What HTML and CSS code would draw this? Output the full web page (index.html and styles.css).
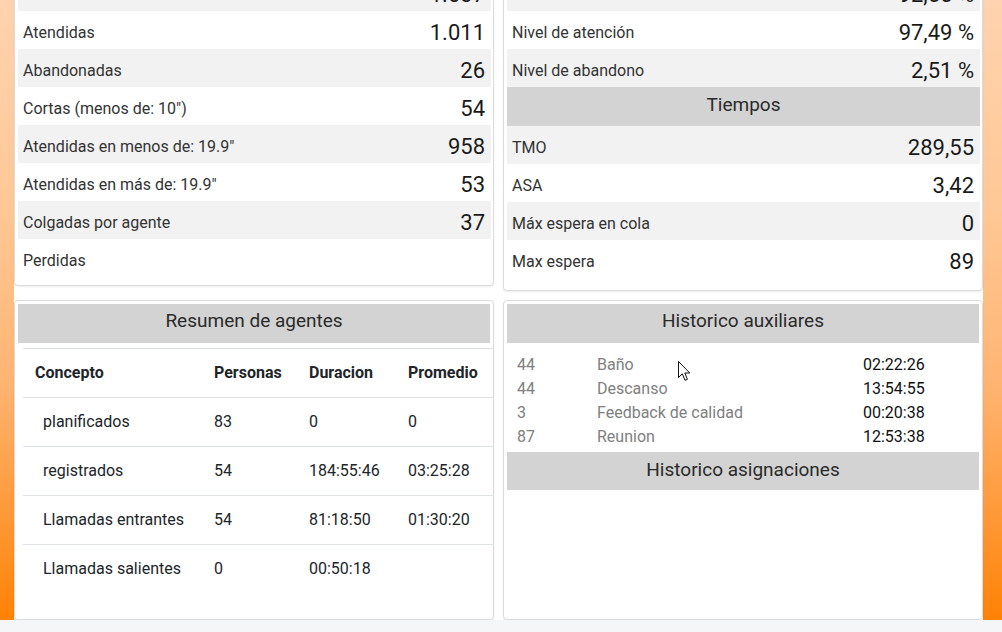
FILE: index.html
```html
<!DOCTYPE html>
<html lang="es">
<head>
<meta charset="utf-8">
<title>Resumen</title>
<link rel="stylesheet" href="styles.css">
</head>
<body>
<div class="frame">
  <div class="content">
    <div class="row1">
      <section class="card stats">
        <div class="stat alt"><span class="label">Recibidas</span><span class="value">1.037</span></div>
        <div class="stat"><span class="label">Atendidas</span><span class="value">1.011</span></div>
        <div class="stat alt"><span class="label">Abandonadas</span><span class="value">26</span></div>
        <div class="stat"><span class="label">Cortas (menos de: 10")</span><span class="value">54</span></div>
        <div class="stat alt"><span class="label">Atendidas en menos de: 19.9"</span><span class="value">958</span></div>
        <div class="stat"><span class="label">Atendidas en más de: 19.9"</span><span class="value">53</span></div>
        <div class="stat alt"><span class="label">Colgadas por agente</span><span class="value">37</span></div>
        <div class="stat"><span class="label">Perdidas</span><span class="value"></span></div>
      </section>
      <section class="card stats stats-right">
        <div class="stat alt"><span class="label">Nivel de servicio</span><span class="value">92,55 %</span></div>
        <div class="stat"><span class="label">Nivel de atención</span><span class="value">97,49 %</span></div>
        <div class="stat alt"><span class="label">Nivel de abandono</span><span class="value">2,51 %</span></div>
        <h3 class="section-title times">Tiempos</h3>
        <div class="stat alt"><span class="label">TMO</span><span class="value">289,55</span></div>
        <div class="stat"><span class="label">ASA</span><span class="value">3,42</span></div>
        <div class="stat alt"><span class="label">Máx espera en cola</span><span class="value">0</span></div>
        <div class="stat"><span class="label">Max espera</span><span class="value">89</span></div>
      </section>
    </div>
    <div class="row2">
      <section class="card">
        <h3 class="section-title">Resumen de agentes</h3>
        <table class="agents">
          <colgroup>
            <col class="c1"><col class="c2"><col class="c3"><col class="c4">
          </colgroup>
          <thead>
            <tr><th>Concepto</th><th>Personas</th><th>Duracion</th><th>Promedio</th></tr>
          </thead>
          <tbody>
            <tr><td class="concept">planificados</td><td>83</td><td>0</td><td>0</td></tr>
            <tr><td class="concept">registrados</td><td>54</td><td>184:55:46</td><td>03:25:28</td></tr>
            <tr><td class="concept">Llamadas entrantes</td><td>54</td><td>81:18:50</td><td>01:30:20</td></tr>
            <tr><td class="concept">Llamadas salientes</td><td>0</td><td>00:50:18</td><td></td></tr>
          </tbody>
        </table>
      </section>
      <section class="card history">
        <h3 class="section-title">Historico auxiliares</h3>
        <div class="aux-list">
          <span class="muted">44</span><span class="muted">Baño</span><span>02:22:26</span>
          <span class="muted">44</span><span class="muted">Descanso</span><span>13:54:55</span>
          <span class="muted">3</span><span class="muted">Feedback de calidad</span><span>00:20:38</span>
          <span class="muted">87</span><span class="muted">Reunion</span><span>12:53:38</span>
        </div>
        <h3 class="section-title short">Historico asignaciones</h3>
        <svg class="cursor" width="13" height="21" viewBox="0 0 13 21" aria-hidden="true">
          <path d="M0.5 0.5 L0.5 16.5 L4.3 12.8 L7 19.3 L9.4 18.3 L6.8 12 L11.8 12 Z" fill="#fff" stroke="#111" stroke-width="1" stroke-linejoin="round"/>
        </svg>
      </section>
    </div>
  </div>
</div>
<div class="strip"></div>
</body>
</html>
```

FILE: styles.css
```css
html, body {
  margin: 0;
  padding: 0;
}

body {
  background: #f5f6f8;
  font-family: Roboto, "Liberation Sans", Arial, sans-serif;
  color: #212529;
  overflow: hidden;
  width: 1002px;
  height: 632px;
}

.frame {
  height: 620px;
  padding: 0 19px 0 14px;
  background: linear-gradient(to bottom, #ffd3af 0%, #ffc794 35%, #ffb472 62%, #ff9a3a 82%, #ff8205 100%);
  overflow: hidden;
  box-sizing: border-box;
}

.content {
  background: #fff;
  height: 648px;
  margin-top: -28px;
  display: flex;
  flex-direction: column;
}

.row1 {
  display: grid;
  grid-template-columns: 480px 480px;
  column-gap: 9px;
  align-items: start;
}

.row2 {
  display: grid;
  grid-template-columns: 480px 480px;
  column-gap: 9px;
  margin-top: 9px;
  height: 320px;
}

.card {
  position: relative;
  background: #fff;
  border: 1px solid #dcdcdc;
  border-radius: 4px;
  box-shadow: 0 1px 2px rgba(0, 0, 0, 0.08);
  padding: 3px 3px 0 3px;
  box-sizing: border-box;
}

.row1 .card {
  border-top-left-radius: 0;
  border-top-right-radius: 0;
  padding: 0 2px 8px 3px;
}

.row1 .stats-right {
  padding-bottom: 12px;
}

.stat {
  height: 38px;
  display: flex;
  align-items: center;
  justify-content: space-between;
  padding: 4px 6px 0 5px;
  box-sizing: border-box;
}

.stat.alt {
  background: #f2f2f2;
}

.label {
  font-size: 16px;
  color: #333;
}

.value {
  font-size: 22px;
  color: #1a1a1a;
}

.section-title {
  margin: 0;
  height: 39px;
  background: #d3d3d3;
  font-size: 19px;
  font-weight: 400;
  color: #2a2a2a;
  text-align: center;
  line-height: 34px;
}

.section-title.times {
  line-height: 36px;
}

.section-title.short {
  height: 38px;
  line-height: 35px;
}

.agents {
  margin: 5px 0 0 5px;
  width: 471px;
  border-collapse: collapse;
  table-layout: fixed;
  font-size: 16px;
  line-height: 24px;
}

.agents .c1 { width: 179px; }
.agents .c2 { width: 95px; }
.agents .c3 { width: 99px; }
.agents .c4 { width: 98px; }

.agents th,
.agents td {
  text-align: left;
  padding: 12px;
  border-top: 1px solid #dee2e6;
  white-space: nowrap;
  color: #212529;
}

.agents th {
  font-weight: 700;
}

.agents td.concept {
  padding-left: 20px;
}

.aux-list {
  display: grid;
  grid-template-columns: 80px 266px auto;
  padding: 10px 0 0 10px;
  margin-bottom: 3px;
  font-size: 16px;
  line-height: 24px;
  color: #111;
}

.aux-list .muted {
  color: #808080;
}

.cursor {
  position: absolute;
  left: 174px;
  top: 60px;
}

.strip {
  height: 12px;
  background: #f5f6f8;
}
```
